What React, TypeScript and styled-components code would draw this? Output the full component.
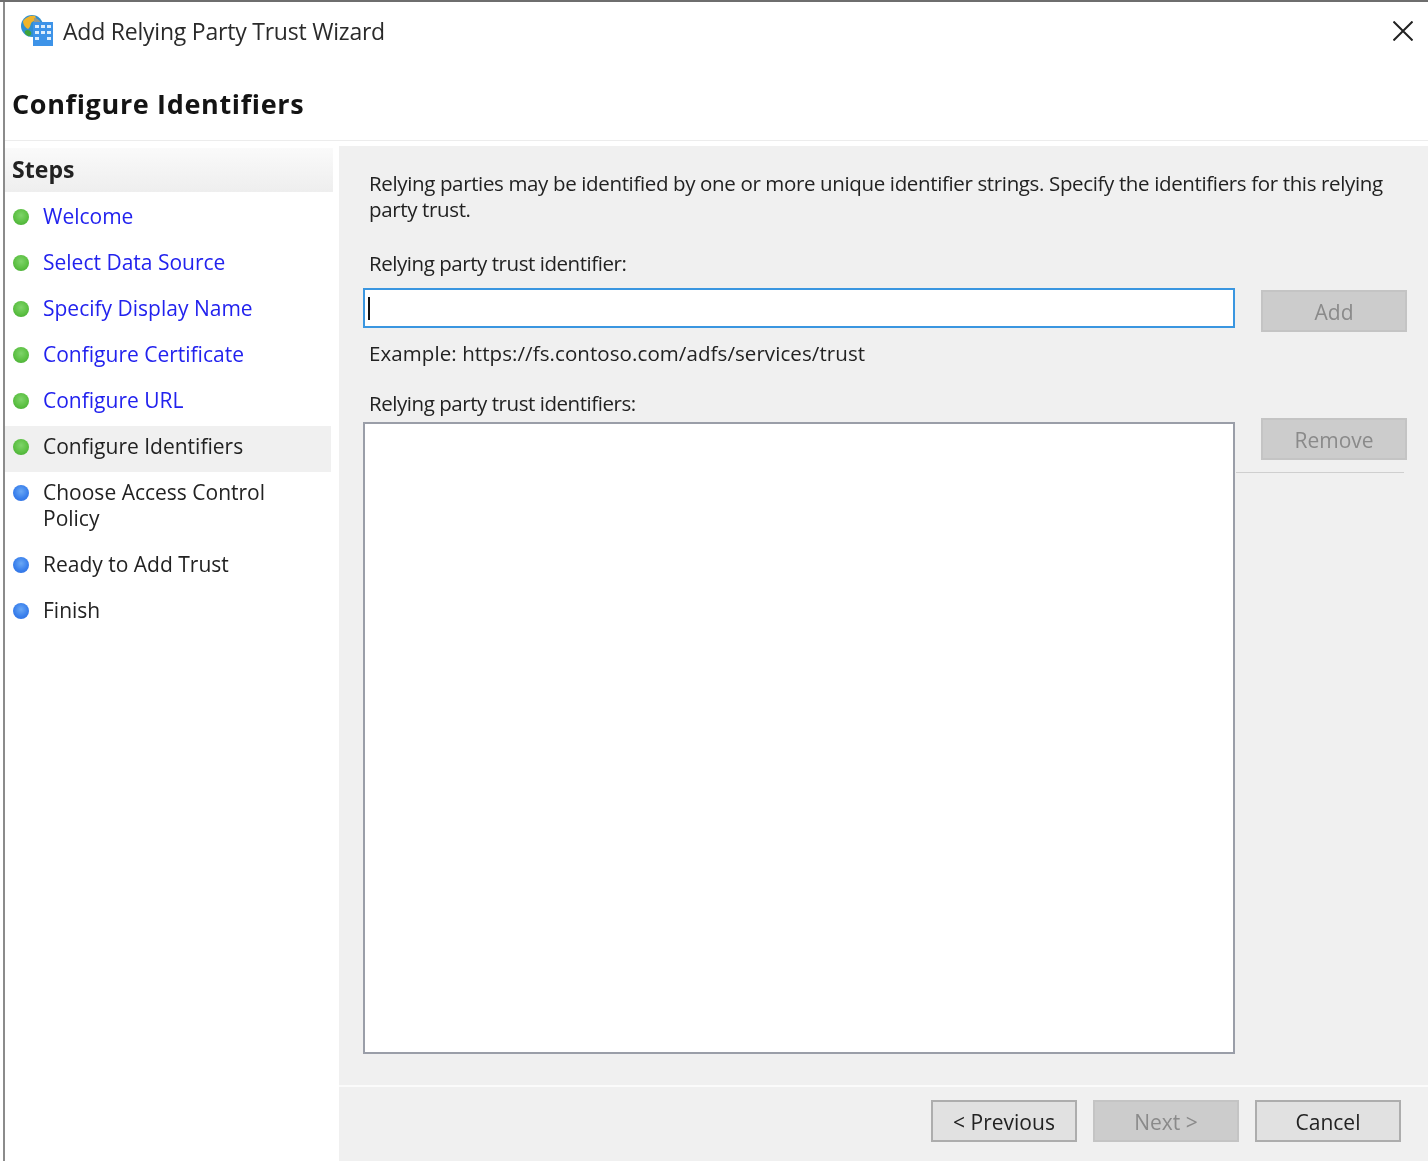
import React from 'react';
import styled, { createGlobalStyle } from 'styled-components';

const GlobalStyle = createGlobalStyle`
  html, body {
    margin: 0;
    padding: 0;
    background: #ffffff;
  }
  body {
    font-family: "Open Sans", "Noto Sans", "Liberation Sans", sans-serif;
    color: #1c1c1c;
  }
`;

const Window = styled.div`
  width: 1428px;
  height: 1161px;
  box-sizing: border-box;
  border-top: 2px solid #6e6e6e;
  padding-left: 3px;
  overflow: hidden;
  background: #fff;
`;

// the reference is an upscaled capture, everything in it is slightly soft
const Frame = styled.div`
  height: 100%;
  border-left: 2px solid #8b8b8b;
  display: flex;
  flex-direction: column;
  filter: blur(0.35px);
`;

const TitleBar = styled.div`
  height: 58px;
  flex: none;
  display: flex;
  align-items: center;
  padding: 0 15px 0 15px;
  gap: 9px;
`;

const WindowTitle = styled.div`
  flex: 1;
  font-size: 23px;
  letter-spacing: -0.22px;
  color: #2a2a2a;
`;

const CloseButton = styled.button`
  width: 20px;
  height: 20px;
  padding: 0;
  border: 0;
  background: none;
  display: flex;
`;

const Heading = styled.h1`
  margin: 0;
  height: 81px;
  flex: none;
  box-sizing: border-box;
  padding: 26px 0 0 7px;
  font-size: 27px;
  line-height: 36px;
  font-weight: 700;
  letter-spacing: 0.65px;
  color: #141414;
  border-bottom: 1px solid #ececec;
`;

const Body = styled.div`
  flex: 1;
  display: grid;
  grid-template-columns: 328px 1fr;
  column-gap: 6px;
  padding-top: 5px;
  min-height: 0;
`;

const Sidebar = styled.nav`
  padding-top: 2px;
`;

const StepsHeader = styled.div`
  height: 44px;
  box-sizing: border-box;
  margin-bottom: 4px;
  padding: 5px 0 0 7px;
  font-size: 23px;
  line-height: 32px;
  font-weight: 700;
  letter-spacing: 0.05px;
  color: #222;
  background: linear-gradient(#fafafa, #eeeeee);
`;

const StepRow = styled.div<{ $current?: boolean }>`
  display: flex;
  gap: 14px;
  margin-right: 2px;
  padding: 7px 60px 13px 8px;
  background: ${({ $current }) => ($current ? '#f0f0f0' : 'transparent')};
`;

const Bullet = styled.span<{ $done?: boolean }>`
  flex: none;
  width: 16px;
  height: 16px;
  margin-top: 6px;
  border-radius: 50%;
  background: ${({ $done }) =>
    $done
      ? 'radial-gradient(circle at 50% 40%, #7fd46a 0%, #5cc043 55%, #3fa52e 100%)'
      : 'radial-gradient(circle at 50% 40%, #6aa8f5 0%, #3a80ec 55%, #2a6ae0 100%)'};
`;

const StepLabel = styled.span<{ $link?: boolean }>`
  font-size: 21px;
  line-height: 26px;
  color: ${({ $link }) => ($link ? '#2222ee' : '#222')};
`;

const Panel = styled.main`
  background: #f0f0f0;
  display: flex;
  flex-direction: column;
`;

const Content = styled.div`
  flex: 1;
  padding: 24px 21px 0 24px;
`;

const Description = styled.p`
  margin: 0 0 28px;
  padding-left: 6px;
  font-size: 20.5px;
  line-height: 26px;
  letter-spacing: -0.36px;
  white-space: nowrap;
  color: #222;
`;

const FieldGrid = styled.div`
  display: grid;
  grid-template-columns: 872px 146px;
  column-gap: 26px;
`;

const Fields = styled.div`
  display: flex;
  flex-direction: column;
`;

const FieldLabel = styled.div`
  padding-left: 6px;
  font-size: 20.5px;
  line-height: 26px;
  letter-spacing: -0.45px;
  color: #222;
`;

const IdentifierInput = styled.div`
  height: 40px;
  margin-top: 12px;
  box-sizing: border-box;
  border: 2px solid #3a96e0;
  background: #fff;
  display: flex;
  align-items: center;
  padding-left: 3px;
`;

const Caret = styled.span`
  width: 2px;
  height: 23px;
  background: #111;
`;

const Example = styled.div`
  margin: 12px 0 24px;
  padding-left: 6px;
  font-size: 20.5px;
  line-height: 26px;
  letter-spacing: 0.08px;
  color: #222;
`;

const IdentifierList = styled.div`
  height: 632px;
  margin-top: 6px;
  box-sizing: border-box;
  border: 2px solid #9a9ea8;
  background: #fff;
`;

const SideActions = styled.div`
  display: flex;
  flex-direction: column;
  padding-top: 40px;
`;

const SideRule = styled.div`
  height: 1px;
  margin: 12px 3px 0 -25px;
  background: #cfcfcf;
`;

const WizardButton = styled.button<{ $disabled?: boolean }>`
  width: 146px;
  height: 42px;
  flex: none;
  box-sizing: border-box;
  padding: 2px 0 0;
  font-family: inherit;
  font-size: 21px;
  border: 2px solid ${({ $disabled }) => ($disabled ? '#c4c4c4' : '#adadad')};
  background: ${({ $disabled }) => ($disabled ? '#cccccc' : '#e1e1e1')};
  color: ${({ $disabled }) => ($disabled ? '#8a8a8a' : '#222')};
`;

const RemoveButton = styled(WizardButton)`
  margin-top: 86px;
`;

const Footer = styled.footer`
  height: 76px;
  flex: none;
  box-sizing: border-box;
  border-top: 2px solid #fbfbfb;
  display: flex;
  justify-content: flex-end;
  gap: 16px;
  padding: 13px 27px 0 0;
`;

const AppIcon = () => (
  <svg width="34" height="34" viewBox="0 0 34 34" style={{ flex: 'none' }}>
    <circle cx="12" cy="12" r="11" fill="#2f8fd0" />
    <path d="M3 7c3-4 8-6 12-5 2 3 0 5-3 6-2 2-1 5-4 7-2-1-5-4-5-8z" fill="#f0b429" />
    <path d="M5 17c2-2 5-1 6 1 1 2-1 5-3 4-2-1-4-3-3-5z" fill="#3fa33a" />
    <path d="M14 4c3 0 6 2 7 5h-7z" fill="#9a9a8a" />
    <rect x="13" y="8" width="20" height="24" fill="#3d93e8" />
    <g fill="#dcedfc">
      <rect x="15" y="11" width="4" height="3" />
      <rect x="21" y="11" width="4" height="3" />
      <rect x="27" y="11" width="4" height="3" />
      <rect x="15" y="17" width="4" height="3" />
      <rect x="21" y="17" width="4" height="3" />
      <rect x="27" y="17" width="4" height="3" />
      <rect x="15" y="23" width="4" height="3" />
      <rect x="27" y="23" width="4" height="3" />
    </g>
  </svg>
);

const CloseIcon = () => (
  <svg width="20" height="20" viewBox="0 0 20 20">
    <path d="M0.5 0.5L19.5 19.5M19.5 0.5L0.5 19.5" stroke="#222" strokeWidth="2" fill="none" />
  </svg>
);

const steps = [
  { label: 'Welcome', done: true, link: true },
  { label: 'Select Data Source', done: true, link: true },
  { label: 'Specify Display Name', done: true, link: true },
  { label: 'Configure Certificate', done: true, link: true },
  { label: 'Configure URL', done: true, link: true },
  { label: 'Configure Identifiers', done: true, current: true },
  { label: 'Choose Access Control Policy' },
  { label: 'Ready to Add Trust' },
  { label: 'Finish' },
];

const App = () => (
  <>
    <GlobalStyle />
    <Window>
      <Frame>
        <TitleBar>
          <AppIcon />
          <WindowTitle>Add Relying Party Trust Wizard</WindowTitle>
          <CloseButton aria-label="Close">
            <CloseIcon />
          </CloseButton>
        </TitleBar>
        <Heading>Configure Identifiers</Heading>
        <Body>
          <Sidebar>
            <StepsHeader>Steps</StepsHeader>
            {steps.map((step) => (
              <StepRow key={step.label} $current={step.current}>
                <Bullet $done={step.done} />
                <StepLabel $link={step.link}>{step.label}</StepLabel>
              </StepRow>
            ))}
          </Sidebar>
          <Panel>
            <Content>
              <Description>
                Relying parties may be identified by one or more unique identifier strings. Specify the identifiers for
                this relying
                <br />
                party trust.
              </Description>
              <FieldGrid>
                <Fields>
                  <FieldLabel>Relying party trust identifier:</FieldLabel>
                  <IdentifierInput>
                    <Caret />
                  </IdentifierInput>
                  <Example>Example: https://fs.contoso.com/adfs/services/trust</Example>
                  <FieldLabel>Relying party trust identifiers:</FieldLabel>
                  <IdentifierList />
                </Fields>
                <SideActions>
                  <WizardButton $disabled>Add</WizardButton>
                  <RemoveButton $disabled>Remove</RemoveButton>
                  <SideRule />
                </SideActions>
              </FieldGrid>
            </Content>
            <Footer>
              <WizardButton>&lt; Previous</WizardButton>
              <WizardButton $disabled>Next &gt;</WizardButton>
              <WizardButton>Cancel</WizardButton>
            </Footer>
          </Panel>
        </Body>
      </Frame>
    </Window>
  </>
);

export default App;
